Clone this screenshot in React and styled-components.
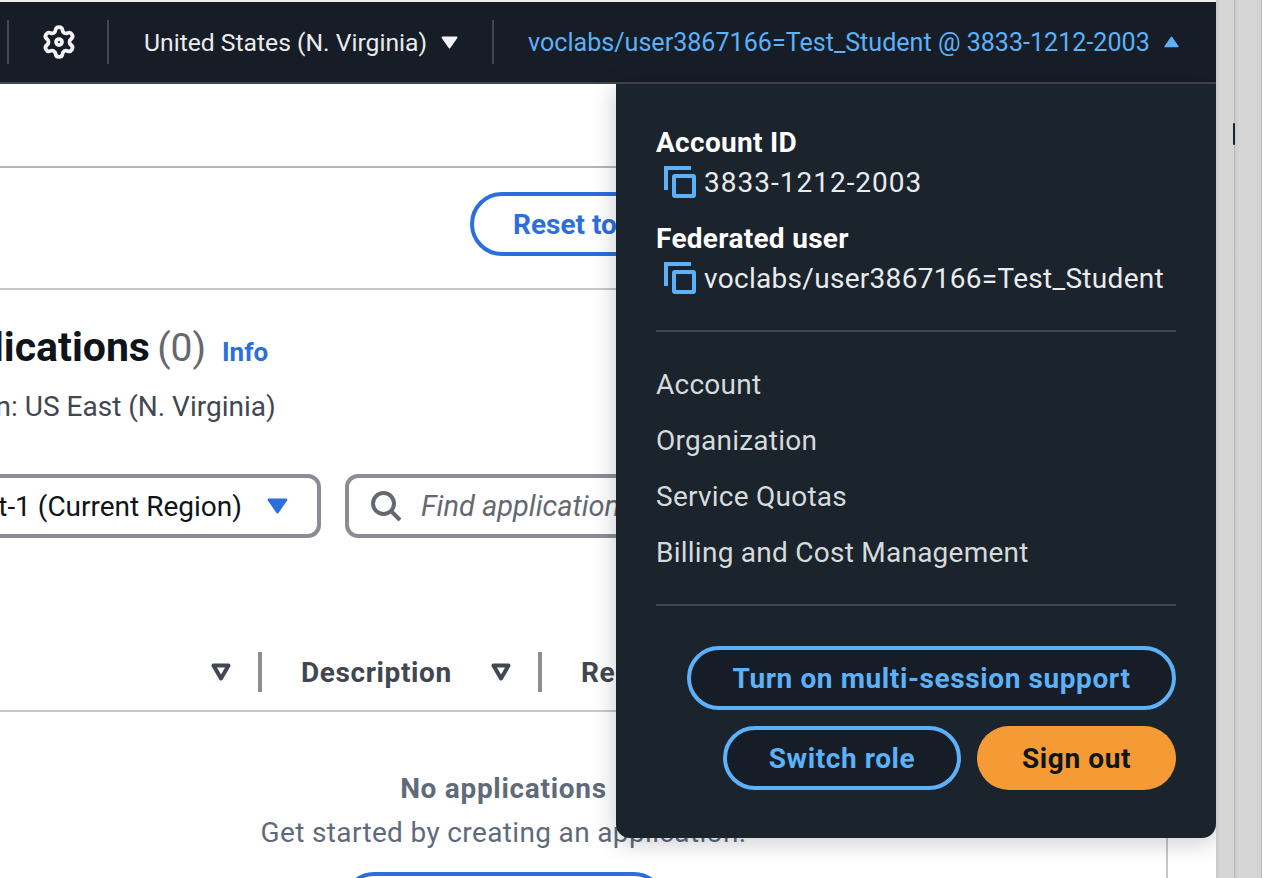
import React from "react";
import styled, { createGlobalStyle } from "styled-components";

const GlobalStyle = createGlobalStyle`
  html, body {
    margin: 0;
    padding: 0;
    background: #ffffff;
  }
  * {
    box-sizing: border-box;
  }
`;

const Screen = styled.div`
  display: flex;
  width: 1262px;
  height: 878px;
  overflow: hidden;
  font-family: Roboto, "Liberation Sans", sans-serif;
`;

const Window = styled.div`
  position: relative;
  display: flex;
  flex-direction: column;
  width: 1216px;
  height: 878px;
  overflow: hidden;
  background: #ffffff;
  border-top: 2px solid #eeeeee;
`;

const EdgeStrip = styled.div`
  position: relative;
  flex: none;
  width: ${(props) => props.$width}px;
  height: 878px;
  background: linear-gradient(90deg, #c9c9c9 0, #d6d6d6 4px, #d4d4d4 100%);
  border-right: 1px solid #bcbcbc;
`;

const EdgeMark = styled.div`
  position: absolute;
  right: -1px;
  top: 123px;
  width: 2px;
  height: 22px;
  border-radius: 1px;
  background: #1b232d;
`;

const TopBar = styled.header`
  flex: none;
  display: flex;
  align-items: center;
  height: 82px;
  padding-left: 7px;
  background: #161d26;
  border-bottom: 2px solid #424650;
`;

const NavDivider = styled.div`
  width: 2px;
  height: 44px;
  background: #424650;
`;

const GearButton = styled.div`
  display: flex;
  width: 98px;
  padding-left: 2px;
  justify-content: center;
`;

const RegionMenu = styled.div`
  display: flex;
  align-items: center;
  gap: 14px;
  width: 383px;
  padding-left: 35px;
  color: #e9ebed;
  font-size: 24.7px;
  white-space: nowrap;
`;

const AccountMenu = styled.div`
  display: flex;
  align-items: center;
  gap: 14px;
  padding-left: 34px;
  color: #5cb1f8;
  font-size: 25.1px;
  white-space: nowrap;
`;

const NavLabel = styled.span`
  margin-top: 1px;
`;

const PageBody = styled.main`
  flex: 1;
  width: 1616px;
  margin-left: -400px;
  display: flex;
  flex-direction: column;
`;

const BlankBand = styled.div`
  flex: none;
  height: 84px;
  border-bottom: 2px solid #b4b4bb;
`;

const ActionsBand = styled.div`
  flex: none;
  height: 122px;
  padding: 24px 0 0 870px;
  border-bottom: 2px solid #c6c6cd;
`;

const OutlineButton = styled.div`
  display: inline-flex;
  align-items: center;
  height: 64px;
  padding: 0 39px;
  border: 4px solid #2a6fdb;
  border-radius: 32px;
  color: #2a6fdb;
  font-size: 28px;
  font-weight: 700;
  white-space: nowrap;
`;

const TitleRow = styled.div`
  display: flex;
  align-items: baseline;
  gap: 16px;
  margin-top: 32px;
  padding-left: 320px;
`;

const Title = styled.h1`
  margin: 0;
  color: #0f141a;
  font-size: 41px;
  font-weight: 700;
  line-height: 50px;
  white-space: nowrap;
`;

const Count = styled.span`
  margin-left: -3px;
  color: #656871;
  font-size: 39px;
  font-weight: 400;
`;

const InfoLink = styled.span`
  color: #2a6fdb;
  font-size: 26px;
  font-weight: 700;
`;

const Subtitle = styled.div`
  margin-top: 17px;
  padding-left: 81px;
  color: #414750;
  font-size: 28px;
  line-height: 34px;
  white-space: nowrap;
`;

const FilterRow = styled.div`
  display: flex;
  gap: 24px;
  margin-top: 50px;
  padding-left: 100px;
`;

const SelectBox = styled.div`
  display: flex;
  align-items: center;
  justify-content: flex-end;
  gap: 25px;
  width: 621px;
  height: 64px;
  padding-right: 29px;
  border: 4px solid #8c8c94;
  border-radius: 13px;
  color: #0f141a;
  font-size: 28px;
  white-space: nowrap;
`;

const SearchBox = styled.div`
  display: flex;
  align-items: center;
  gap: 19px;
  width: 700px;
  height: 64px;
  padding-left: 21px;
  border: 4px solid #8c8c94;
  border-radius: 13px;
  color: #656871;
  font-size: 29px;
  font-style: italic;
  white-space: nowrap;
`;

const TableHead = styled.div`
  display: flex;
  align-items: center;
  height: 59px;
  margin-top: 115px;
  padding: 0 0 19px 611px;
  border-bottom: 2px solid #c6c6cd;
`;

const HeadLabel = styled.span`
  width: ${(props) => props.$width}px;
  color: #414750;
  font-size: 28px;
  font-weight: 700;
  letter-spacing: 0.6px;
  white-space: nowrap;
`;

const SortCaret = styled.svg`
  flex: none;
  width: 20px;
  height: 18px;
  margin-right: 27px;
`;

const HeadDivider = styled.div`
  flex: none;
  width: 4px;
  height: 40px;
  margin-right: 39px;
  background: #8c8c94;
`;

const EmptyState = styled.div`
  display: flex;
  flex-direction: column;
  align-items: center;
  width: 1807px;
  padding-top: 59px;
  color: #5f6b7a;
  font-size: 28px;
  letter-spacing: 0.35px;
  white-space: nowrap;
`;

const EmptyTitle = styled.div`
  font-weight: 700;
  letter-spacing: 0.7px;
  line-height: 36px;
`;

const EmptyText = styled.div`
  margin-top: 8px;
  line-height: 36px;
`;

const CreateButton = styled(OutlineButton)`
  justify-content: center;
  width: 324px;
  margin-top: 21px;
`;

const TableEdge = styled.div`
  position: absolute;
  left: 1166px;
  top: 709px;
  bottom: 0;
  width: 2px;
  background: #c6c6cd;
`;

const AccountPanel = styled.aside`
  position: absolute;
  left: 616px;
  top: 82px;
  display: flex;
  flex-direction: column;
  width: 600px;
  height: 754px;
  padding: 40px 40px 0;
  background: #1b232d;
  border-radius: 0 0 14px 14px;
  box-shadow: 0 4px 24px rgba(0, 7, 22, 0.22);
  color: #e9ebed;
`;

const FieldLabel = styled.div`
  padding-top: 2px;
  color: #ffffff;
  font-size: 28px;
  font-weight: 700;
  letter-spacing: 0.3px;
  line-height: 34px;
`;

const FieldValue = styled.div`
  display: flex;
  align-items: center;
  gap: 8px;
  height: 44px;
  margin-bottom: ${(props) => props.$after}px;
  padding-left: 8px;
  font-size: 28px;
  letter-spacing: ${(props) => props.$spacing}px;
  white-space: nowrap;
`;

const PanelRule = styled.hr`
  flex: none;
  width: 100%;
  height: 2px;
  margin: 0;
  border: 0;
  background: #424650;
`;

const PanelLinks = styled.nav`
  display: flex;
  flex-direction: column;
  padding: 25px 0 23px;
`;

const PanelLink = styled.div`
  height: 56px;
  color: #d5dbdb;
  font-size: 28px;
  letter-spacing: 0.25px;
  line-height: 56px;
`;

const PanelActions = styled.div`
  display: flex;
  flex-wrap: wrap;
  justify-content: flex-end;
  gap: 16px;
  padding-top: 40px;
`;

const PanelButton = styled.div`
  display: flex;
  align-items: center;
  justify-content: center;
  width: ${(props) => props.$width}px;
  height: 64px;
  border: ${(props) => (props.$primary ? "0" : "4px solid #5cb1f8")};
  border-radius: 32px;
  background: ${(props) => (props.$primary ? "#f59b35" : "#161d26")};
  color: ${(props) => (props.$primary ? "#0f141a" : "#5cb1f8")};
  font-size: 28px;
  font-weight: 700;
  letter-spacing: 0.6px;
  white-space: nowrap;
`;

const GearIcon = () => (
  <svg
    width="36"
    height="36"
    viewBox="0 0 24 24"
    fill="none"
    stroke="#f3f3f7"
    strokeWidth="2.5"
    strokeLinejoin="round"
    aria-hidden="true"
  >
    <path d="M9.671 4.136a2.34 2.34 0 0 1 4.659 0 2.34 2.34 0 0 0 3.319 1.915 2.34 2.34 0 0 1 2.33 4.033 2.34 2.34 0 0 0 0 3.831 2.34 2.34 0 0 1-2.33 4.033 2.34 2.34 0 0 0-3.319 1.915 2.34 2.34 0 0 1-4.659 0 2.34 2.34 0 0 0-3.32-1.915 2.34 2.34 0 0 1-2.33-4.033 2.34 2.34 0 0 0 0-3.831A2.34 2.34 0 0 1 6.35 6.051a2.34 2.34 0 0 0 3.32-1.915" />
    <circle cx="12" cy="12" r="2" />
  </svg>
);

const Caret = ({ up, color, width = 17, height = 13 }) => (
  <svg width={width} height={height} viewBox="0 0 17 13" aria-hidden="true">
    <path
      d={up ? "M8.5 1.5 15.5 11.5H1.5Z" : "M1.5 1.5H15.5L8.5 11.5Z"}
      fill={color}
      stroke={color}
      strokeWidth="2"
      strokeLinejoin="round"
    />
  </svg>
);

const CopyIcon = () => (
  <svg width="32" height="32" viewBox="0 0 32 32" fill="none" aria-hidden="true">
    <path d="M2 24V2H27" stroke="#5cb1f8" strokeWidth="4" />
    <rect x="10" y="10" width="20" height="20" rx="1" stroke="#5cb1f8" strokeWidth="4" />
  </svg>
);

const SearchIcon = () => (
  <svg width="32" height="32" viewBox="0 0 32 32" fill="none" aria-hidden="true">
    <circle cx="13.5" cy="13.5" r="10.5" stroke="#656871" strokeWidth="4" />
    <path d="M21 21 30 30" stroke="#656871" strokeWidth="4" />
  </svg>
);

const SortIcon = () => (
  <SortCaret viewBox="0 0 20 18" aria-hidden="true">
    <path
      d="M2.5 2.5H17.5L10 15.5Z"
      fill="none"
      stroke="#414750"
      strokeWidth="4"
      strokeLinejoin="round"
    />
  </SortCaret>
);

const App = () => {
  return (
    <Screen>
      <GlobalStyle />
      <Window>
        <TopBar>
          <NavDivider />
          <GearButton>
            <GearIcon />
          </GearButton>
          <NavDivider />
          <RegionMenu>
            <NavLabel>United States (N. Virginia)</NavLabel>
            <Caret color="#f3f3f7" />
          </RegionMenu>
          <NavDivider />
          <AccountMenu>
            <NavLabel>voclabs/user3867166=Test_Student @ 3833-1212-2003</NavLabel>
            <Caret up color="#5cb1f8" width={15} height={12} />
          </AccountMenu>
        </TopBar>
        <PageBody>
          <BlankBand />
          <ActionsBand>
            <OutlineButton>Reset to defaults</OutlineButton>
          </ActionsBand>
          <TitleRow>
            <Title>
              Applications <Count>(0)</Count>
            </Title>
            <InfoLink>Info</InfoLink>
          </TitleRow>
          <Subtitle>Applications in this Region: US East (N. Virginia)</Subtitle>
          <FilterRow>
            <SelectBox>
              us-east-1 (Current Region)
              <Caret color="#2a6fdb" width={21} height={18} />
            </SelectBox>
            <SearchBox>
              <SearchIcon />
              Find applications
            </SearchBox>
          </FilterRow>
          <TableHead>
            <SortIcon />
            <HeadDivider />
            <HeadLabel $width={190}>Description</HeadLabel>
            <SortIcon />
            <HeadDivider />
            <HeadLabel $width={120}>Region</HeadLabel>
          </TableHead>
          <EmptyState>
            <EmptyTitle>No applications</EmptyTitle>
            <EmptyText>Get started by creating an application.</EmptyText>
            <CreateButton>Create application</CreateButton>
          </EmptyState>
        </PageBody>
        <TableEdge />
        <AccountPanel>
          <FieldLabel>Account ID</FieldLabel>
          <FieldValue $after={16} $spacing={1}>
            <CopyIcon />
            3833-1212-2003
          </FieldValue>
          <FieldLabel>Federated user</FieldLabel>
          <FieldValue $after={30} $spacing={0.3}>
            <CopyIcon />
            voclabs/user3867166=Test_Student
          </FieldValue>
          <PanelRule />
          <PanelLinks>
            <PanelLink>Account</PanelLink>
            <PanelLink>Organization</PanelLink>
            <PanelLink>Service Quotas</PanelLink>
            <PanelLink>Billing and Cost Management</PanelLink>
          </PanelLinks>
          <PanelRule />
          <PanelActions>
            <PanelButton $width={489}>Turn on multi-session support</PanelButton>
            <PanelButton $width={238}>Switch role</PanelButton>
            <PanelButton $width={199} $primary>
              Sign out
            </PanelButton>
          </PanelActions>
        </AccountPanel>
      </Window>
      <EdgeStrip $width={19}>
        <EdgeMark />
      </EdgeStrip>
      <EdgeStrip $width={27} />
    </Screen>
  );
};

export default App;
